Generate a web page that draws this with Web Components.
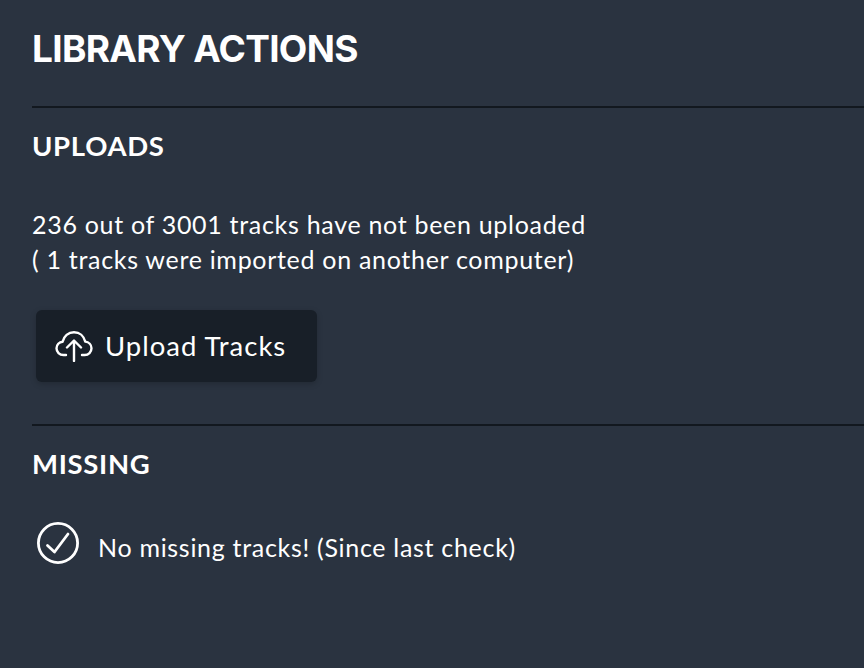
<!DOCTYPE html>
<html>
<head>
<meta charset="utf-8">
<title>Library Actions</title>
<style>
html, body { margin: 0; height: 100%; background: #2a3340; overflow: hidden; }
</style>
</head>
<body>
<library-actions></library-actions>

<template id="library-actions-template">
    <style>
        :host {
            display: block;
            color: #fff;
            font-family: "Lato", "Noto Sans", sans-serif;
            padding-left: 32px;
            height: 668px;
            box-sizing: border-box;
        }
        h1 {
            font-family: "Inter", "Liberation Sans", sans-serif;
            font-size: 37px;
            font-weight: 700;
            line-height: 42px;
            letter-spacing: -0.7px;
            margin: 0;
            padding-top: 28px;
            height: 106px;
            box-sizing: border-box;
            white-space: nowrap;
        }
        .uploads-text {
            font-size: 25px;
            letter-spacing: 0.7px;
            line-height: 35px;
            padding-top: 43px;
        }
        .uploads-text div { white-space: nowrap; }
        upload-button { margin: 33px 0 42px 4px; }
    </style>
    <h1>LIBRARY ACTIONS</h1>
    <section-block title="UPLOADS">
        <div class="uploads-text">
            <div>236 out of 3001 tracks have not been uploaded</div>
            <div>( 1 tracks were imported on another computer)</div>
        </div>
        <upload-button>Upload Tracks</upload-button>
    </section-block>
    <section-block title="MISSING">
        <status-line>No missing tracks! (Since last check)</status-line>
    </section-block>
</template>

<template id="section-block-template">
    <style>
        :host {
            display: block;
            border-top: 2px solid #12181f;
        }
        h2 {
            font-size: 27.5px;
            font-weight: 700;
            letter-spacing: 0.7px;
            line-height: 36px;
            margin: 0;
            padding-top: 20px;
        }
    </style>
    <h2></h2>
    <slot></slot>
</template>

<template id="upload-button-template">
    <style>
        :host {
            display: block;
            width: 281px;
            height: 72px;
        }
        button {
            all: unset;
            box-sizing: border-box;
            display: flex;
            align-items: center;
            gap: 12px;
            width: 100%;
            height: 100%;
            padding-left: 19px;
            background: #181f28;
            border-radius: 6px;
            box-shadow: 0 2px 6px rgba(0, 0, 0, 0.2);
            color: #fff;
            font: inherit;
            font-size: 27.5px;
            letter-spacing: 1px;
            white-space: nowrap;
        }
        svg { width: 38px; height: 32px; flex: none; }
        span { padding-bottom: 2px; }
    </style>
    <button>
        <svg viewBox="0 0 38 32" fill="none" stroke="#fff" stroke-width="2.4" stroke-linecap="round" stroke-linejoin="round">
            <path d="M11 25H8.5C4.5 25 1.5 22 1.5 18.3C1.5 14.8 4.2 12 7.6 11.7C8.8 6.2 13.3 2.2 19 2.2C24.6 2.2 29 6 30.2 11.6C33.8 12 36.5 14.8 36.5 18.3C36.5 22 33.5 25 29.8 25H27"/>
            <path d="M19 31V11M12 17.5L19 10.5L26 17.5"/>
        </svg>
        <span><slot></slot></span>
    </button>
</template>

<template id="status-line-template">
    <style>
        :host {
            display: flex;
            align-items: center;
            gap: 19px;
            margin: 40px 0 0 5px;
            font-size: 25px;
            letter-spacing: 0.7px;
        }
        svg { width: 42px; height: 42px; flex: none; }
        span { padding-top: 8px; white-space: nowrap; }
    </style>
    <svg viewBox="0 0 42 42" fill="none" stroke="#fff" stroke-width="2.8" stroke-linecap="round" stroke-linejoin="round">
        <circle cx="21" cy="21" r="19.6"/>
        <path d="M10.5 23.5L17.5 30L31 12"/>
    </svg>
    <span><slot></slot></span>
</template>

<script>
function cloneTemplate(id) {
    return document.getElementById(id).content.cloneNode(true);
}

class SectionBlock extends HTMLElement {
    constructor() {
        super();
        const shadow = this.attachShadow({ mode: "open" });
        shadow.appendChild(cloneTemplate("section-block-template"));
        shadow.querySelector("h2").textContent = this.getAttribute("title");
        this.removeAttribute("title");
    }
}

class UploadButton extends HTMLElement {
    constructor() {
        super();
        this.attachShadow({ mode: "open" }).appendChild(cloneTemplate("upload-button-template"));
    }
}

class StatusLine extends HTMLElement {
    constructor() {
        super();
        this.attachShadow({ mode: "open" }).appendChild(cloneTemplate("status-line-template"));
    }
}

class LibraryActions extends HTMLElement {
    constructor() {
        super();
        this.attachShadow({ mode: "open" }).appendChild(cloneTemplate("library-actions-template"));
    }
}

customElements.define("section-block", SectionBlock);
customElements.define("upload-button", UploadButton);
customElements.define("status-line", StatusLine);
customElements.define("library-actions", LibraryActions);
</script>
</body>
</html>
